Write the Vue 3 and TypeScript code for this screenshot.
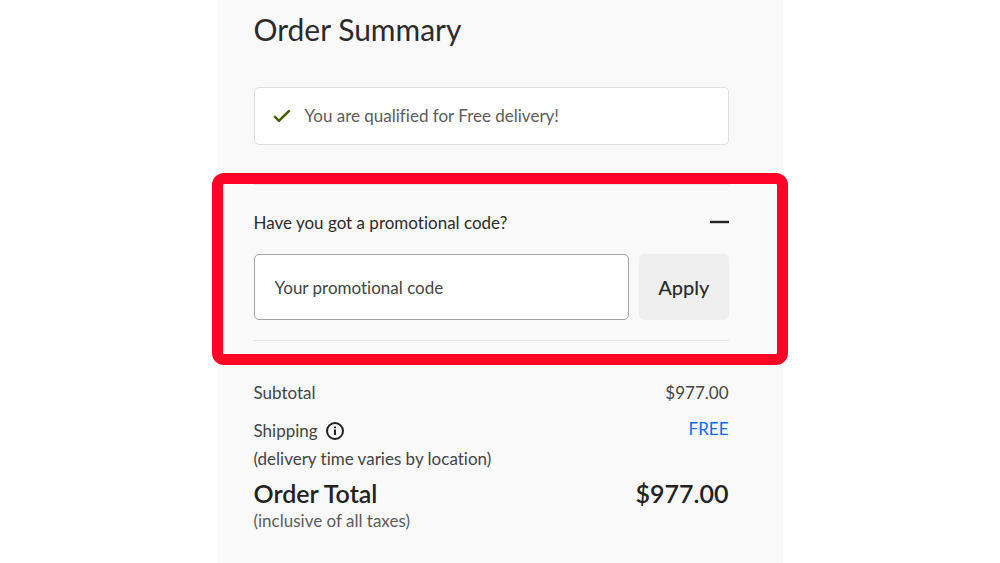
<script setup lang="ts">
import { ref } from 'vue'

const code = ref<string>('')
const open = ref<boolean>(true)
const subtotal = '$977.00'
const total = '$977.00'
</script>

<template>
  <main class="summary">
    <h1 class="title">Order Summary</h1>

    <p class="notice">
      <svg class="check" viewBox="0 0 18 14" aria-hidden="true">
        <path d="M1.2 7.2 6 11.8 16.6 1.4" />
      </svg>
      <span>You are qualified for Free delivery!</span>
    </p>

    <section class="promo">
      <div class="promo-head">
        <label for="promo-code">Have you got a promotional code?</label>
        <button class="toggle" type="button" aria-label="Toggle promotional code" :aria-expanded="open" @click="open = !open">
          <svg viewBox="0 0 19 19" aria-hidden="true"><path d="M0 8H19" /></svg>
        </button>
      </div>
      <form v-show="open" class="promo-form" @submit.prevent>
        <input id="promo-code" v-model="code" class="field" type="text" placeholder="Your promotional code" />
        <button class="apply" type="submit">Apply</button>
      </form>
      <div class="highlight" aria-hidden="true"></div>
    </section>

    <dl class="costs">
      <div class="row">
        <dt>Subtotal</dt>
        <dd>{{ subtotal }}</dd>
      </div>
      <div class="row">
        <dt>
          <span class="shipping">
            Shipping
            <svg class="info" viewBox="0 0 18 18" aria-hidden="true">
              <circle cx="9" cy="9" r="8" />
              <path d="M9 7.6V13" />
              <path d="M9 4.6V6.2" />
            </svg>
          </span>
          <span class="note">(delivery time varies by location)</span>
        </dt>
        <dd class="free">FREE</dd>
      </div>
      <div class="row total">
        <dt>
          Order Total
          <span class="tax">(inclusive of all taxes)</span>
        </dt>
        <dd>{{ total }}</dd>
      </div>
    </dl>
  </main>
</template>

<style>
body {
  margin: 0;
  background: #fff;
}
</style>

<style scoped>
.summary {
  box-sizing: border-box;
  width: 56.5%;
  min-height: 100vh;
  margin: 0 auto;
  padding: 8px 54px 28px 36px;
  background: #f9f9f9;
  color: #2b2b2b;
  font-family: Lato, "Liberation Sans", sans-serif;
  font-size: 17px;
  font-variant-ligatures: none;
  line-height: 28px;
}

.title {
  margin: 0 0 37px;
  font-size: 30px;
  font-weight: 400;
  line-height: 42px;
}

.notice {
  display: flex;
  align-items: center;
  gap: 14px;
  margin: 0 0 39px;
  padding: 14px 18px;
  border: 1px solid #dedede;
  border-radius: 5px;
  background: #fff;
  color: #5c5c5c;
}

.check {
  width: 18px;
  height: 14px;
  fill: none;
  stroke: #435f00;
  stroke-width: 2.5;
}

.promo {
  position: relative;
  padding: 24px 0 20px;
  border-top: 1px solid #e6e6e6;
  border-bottom: 1px solid #e2e2e2;
}

.promo-head {
  display: flex;
  align-items: center;
  justify-content: space-between;
}

.toggle {
  display: flex;
  padding: 0;
  border: 0;
  background: none;
  cursor: pointer;
}

.toggle svg {
  width: 19px;
  height: 19px;
  stroke: #222;
  stroke-width: 2.4;
}

.promo-form {
  display: flex;
  gap: 10px;
  margin-top: 17px;
}

.field {
  box-sizing: border-box;
  flex: 1;
  min-width: 0;
  height: 66px;
  padding: 0 20px;
  border: 1px solid #a3a3a3;
  border-radius: 5px;
  background: #fff;
  color: #2b2b2b;
  font: inherit;
}

.field::placeholder {
  color: #444;
  opacity: 1;
}

.apply {
  padding: 0 19px;
  border: 0;
  border-radius: 5px;
  background: #efefef;
  color: #2b2b2b;
  font: inherit;
  font-size: 20px;
  font-weight: 500;
  cursor: pointer;
}

.highlight {
  position: absolute;
  inset: -12px -59px -25px -42px;
  border: 11px solid #ff0426;
  border-radius: 12px;
  pointer-events: none;
}

.costs {
  margin: 38px 0 0;
  color: #444;
}

.row {
  display: flex;
  justify-content: space-between;
  margin-bottom: 10px;
}

.row dd {
  margin: 0;
}

.shipping {
  display: flex;
  align-items: center;
  gap: 8px;
}

.info {
  width: 18px;
  height: 18px;
  fill: none;
  stroke: #222;
  stroke-width: 2;
}

.note,
.tax {
  display: block;
}

.row .free {
  color: #0a6cf0;
  line-height: 24px;
}

.row.total {
  margin: -6px 0 0;
  color: #222;
  font-size: 25px;
  font-weight: 600;
  line-height: 32px;
}

.tax {
  color: #5c5c5c;
  font-size: 17px;
  font-weight: 400;
  line-height: 24px;
}
</style>
